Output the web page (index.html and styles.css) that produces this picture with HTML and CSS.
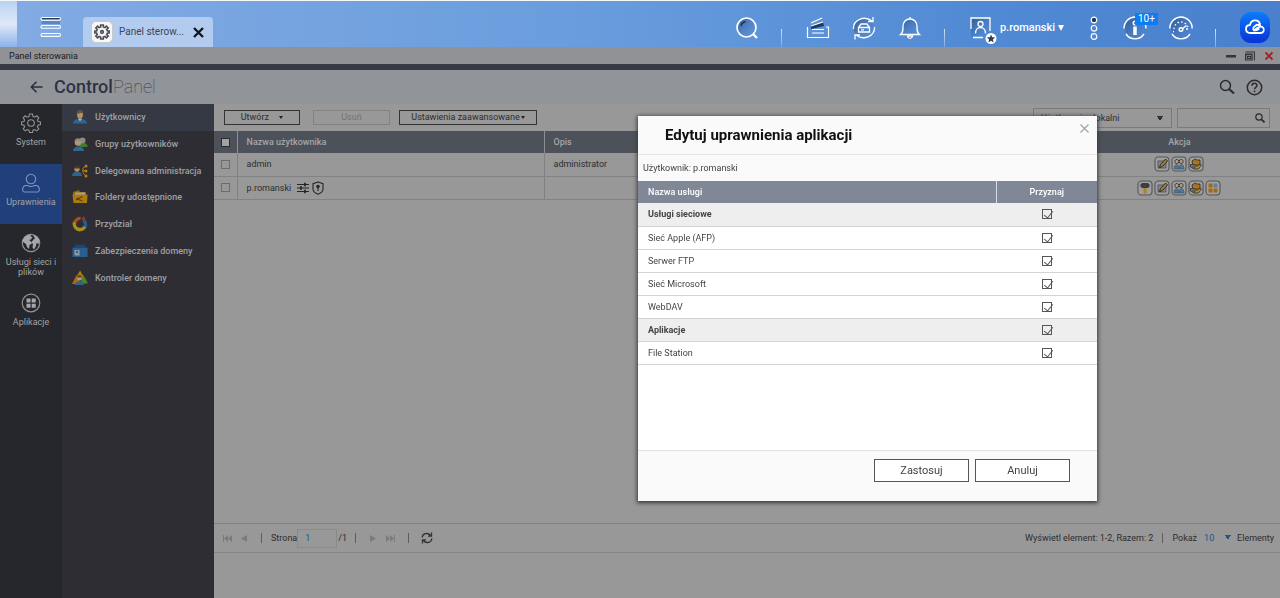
FILE: index.html
```html
<!DOCTYPE html>
<html lang="pl">
<head>
<meta charset="utf-8">
<title>Panel sterowania</title>
<link rel="stylesheet" href="styles.css">
</head>
<body>
<svg width="0" height="0" class="defs" aria-hidden="true">
  <defs>
    <linearGradient id="cloudBg" x1="0" y1="0" x2="0" y2="1"><stop offset="0" stop-color="#0a7cfb"/><stop offset="1" stop-color="#0a32d8"/></linearGradient>
    <linearGradient id="shade" x1="0" y1="0" x2="1" y2="1"><stop offset="0" stop-color="#24426f" stop-opacity=".7"/><stop offset="1" stop-color="#4f83c9" stop-opacity="0"/></linearGradient>
    <symbol id="pencil" viewBox="0 0 16 16"><rect x="1" y="1" width="14" height="14" rx="3.5" fill="#a0a0a0" stroke="#555" stroke-width="1.1"/><rect x="4" y="5" width="8" height="7" fill="#7d8590" stroke="#454b56" stroke-width=".8"/><path d="M5.500 11.500l1-3 5-5.500 2 2-5 5.500z" fill="#a97c26" stroke="#2b2b2b" stroke-width="1"/></symbol>
    <symbol id="group" viewBox="0 0 16 16"><rect x="1" y="1" width="14" height="14" rx="3.5" fill="#a0a0a0" stroke="#555" stroke-width="1.1"/><path d="M3 13c0-6 5-6 5-.3 0-5.700 5-5.700 5 .3z" fill="#4f7796" stroke="#34536f" stroke-width=".6"/><circle cx="5.800" cy="5.500" r="2" fill="#b5a28b" stroke="#3b332c" stroke-width=".9"/><circle cx="10.200" cy="5.500" r="2" fill="#b5a28b" stroke="#3b332c" stroke-width=".9"/></symbol>
    <symbol id="share" viewBox="0 0 16 16"><rect x="1" y="1" width="14" height="14" rx="3.500" fill="#a0a0a0" stroke="#555" stroke-width="1.1"/><path d="M4 5l3-2 2 1h3v5H5z" fill="#a57622" stroke="#2f2a26" stroke-width=".8"/><path d="M2.500 8.500h3l1 1.500h3l3-2 1 1-3 4H6l-3.500-2z" fill="#b58a36" stroke="#2f2a26" stroke-width=".8"/><path d="M3.500 9.500l4 1.500v2l-4-1.500z" fill="#2f5e8c"/></symbol>
    <symbol id="roller" viewBox="0 0 16 16"><rect x="1" y="1" width="14" height="14" rx="3.500" fill="#a0a0a0" stroke="#555" stroke-width="1.1"/><path d="M3.500 4.500L5 3h6l1.500 1.500v2L11 8H5L3.500 6.500z" fill="#3a3e43"/><path d="M6.500 8h3v5L8 14l-1.500-1z" fill="#b5801f"/></symbol>
    <symbol id="tiles" viewBox="0 0 16 16"><rect x="1" y="1" width="14" height="14" rx="3.500" fill="#a0a0a0" stroke="#555" stroke-width="1.100"/><path d="M3.500 3.500h4v4h-4zM3.500 8.500h4v4h-4zM8.500 8.500h4v4h-4z" fill="#a0690f"/><path d="M8.500 3.500h4v4h-4z" fill="#5d80a2"/></symbol>
  </defs>
</svg>

<header class="topbar">
  <button class="menu-btn" aria-label="Menu">
    <svg width="22" height="22" viewBox="0 0 22 22" fill="none" stroke="#fff" stroke-width="1.100"><rect x="1" y="1.500" width="19.500" height="2.600" rx="1.300" fill="#27385a"/><path d="M1.500 5h18.500v3H1.500z" fill="#24426f" fill-opacity=".35" stroke="none"/><rect x="1" y="9.500" width="19.500" height="2.800" rx="1.400"/><rect x="1" y="17.500" width="19.500" height="2.900" rx="1.400"/></svg>
  </button>
  <div class="tab">
    <span class="tab-icon">
      <svg width="16" height="16" viewBox="0 0 24 24" fill="none" stroke="#4b4d52" stroke-width="2.400"><path d="M10 1.500h4v3l2.400 1 2.200-2.200 2.700 2.700-2.200 2.200 1 2.300h3v3h-3l-1 2.400 2.200 2.200-2.700 2.700-2.200-2.200-2.400 1v3h-4v-3l-2.400-1-2.200 2.200-2.700-2.700 2.200-2.200-1-2.400h-3v-3h3l1-2.300L2.700 6l2.700-2.700 2.200 2.200 2.400-1z"/><circle cx="12" cy="12" r="2"/></svg>
    </span>
    <span class="tab-label">Panel sterow...</span>
    <button class="tab-close" aria-label="Zamknij kartę"><svg width="11" height="11" viewBox="0 0 11 11" stroke="#151515" stroke-width="2.300"><path d="M1 1l9 9M10 1L1 10"/></svg></button>
  </div>
  <nav class="tools" aria-label="Pasek narzędzi">
    <button class="tool" aria-label="Szukaj"><svg width="24" height="24" viewBox="0 0 24 24" fill="none" stroke="#fff" stroke-width="1.700"><circle cx="11.500" cy="11.500" r="9.500" fill="url(#shade)"/><path d="M18 18l4 4" stroke-width="2.400"/><path d="M6 10c.5-2.500 2-3.800 4.500-4.300" stroke="#263752"/></svg></button>
    <i class="sep"></i>
    <button class="tool" aria-label="Multimedia"><svg width="24" height="24" viewBox="0 0 24 24" fill="none" stroke="#fff" stroke-width="1.200"><path d="M5 10l12-4 1 4-13 3z" fill="#263752" stroke="none"/><path d="M5 7l11-5M5 10l12-4M6 13.500h12M6 17h12M1.500 11v10.500h21V11h-2.500"/></svg></button>
    <button class="tool" aria-label="Urządzenia"><svg width="24" height="24" viewBox="0 0 24 24" fill="none" stroke="#fff" stroke-width="1.300"><circle cx="12" cy="12" r="10.500" fill="url(#shade)" stroke="none"/><path d="M1.500 13C1 4 12-1 20 5M22.500 11c.5 9-10.500 14-18.500 8M21 1v4.500h-5M3 23.500V19h5"/><path d="M6.500 11.500L9 8h6l2.500 3.500v4.500h-11zM6.500 11.500h11M9 13.800h3"/></svg></button>
    <button class="tool" aria-label="Powiadomienia"><svg width="24" height="24" viewBox="0 0 24 24" fill="none" stroke="#fff" stroke-width="1.300"><path d="M2.500 18.500c2.500-2 2.500-4 2.500-8 0-4.500 3-7.500 7-7.500s7 3 7 7.500c0 4 0 6 2.500 8z" fill="url(#shade)"/><path d="M12 1v2"/><path d="M9.500 20c.5 3 4.500 3 5 0z" fill="#263752"/></svg></button>
    <i class="sep"></i>
    <button class="user">
      <svg width="28" height="28" viewBox="0 0 28 28" fill="none" stroke="#fff" stroke-width="1.300"><rect x="2" y="2" width="19" height="18" fill="url(#shade)" stroke="none"/><path d="M2 13V2h19v13M4 21.500h10"/><circle cx="11.500" cy="8" r="2.500"/><path d="M6.500 17.500c0-8 10-8 10 0"/><circle cx="22" cy="22.500" r="5.500" fill="#fff" stroke="none"/><path d="M22 18.500l1.200 2.700 2.900.3-2.200 2 .7 2.900-2.600-1.600-2.600 1.600.7-2.900-2.200-2 2.900-.3z" fill="#29415f" stroke="none"/></svg>
      <span>p.romanski</span>
      <svg width="6" height="6" viewBox="0 0 6 6"><path d="M0 0h6L3 6z" fill="#fff"/></svg>
    </button>
    <button class="more" aria-label="Więcej"><svg width="8" height="24" viewBox="0 0 8 24" fill="none" stroke="#fff" stroke-width="1.200"><circle cx="4" cy="4" r="2.800" fill="#263752"/><circle cx="4" cy="12.300" r="2.800"/><circle cx="4" cy="20.500" r="2.800"/></svg></button>
    <button class="tool info" aria-label="Informacje"><svg width="24" height="24" viewBox="0 0 24 24" fill="none" stroke="#fff" stroke-width="1.400"><circle cx="12" cy="12" r="10" fill="url(#shade)" stroke="none"/><path d="M1 12.500C1 6 6 1 12 1s11 5 11 11.500M3 18c4.500 6.500 13.500 6.500 18 0"/><circle cx="12" cy="7" r="1.800"/><path d="M12 10.500v8.500" stroke-width="3.500"/></svg><span class="badge">10+</span></button>
    <button class="tool dash" aria-label="Pulpit"><svg width="24" height="24" viewBox="0 0 24 24" fill="none" stroke="#fff" stroke-width="1.400"><circle cx="12" cy="12" r="10" fill="url(#shade)" stroke="none"/><path d="M.8 12.500C.8 6 6 1 12 1s11.200 5 11.200 11.500M3 18c4.500 6.500 13.500 6.500 18 0"/><path d="M5 13a7 7 0 0 1 14 0" stroke-dasharray="1.500 2.200"/><circle cx="12" cy="13.500" r="1.800"/><path d="M13 13l4.500-3.500M4 15.500h1M17 13h2"/></svg></button>
    <i class="sep"></i>
    <button class="cloud" aria-label="myQNAPcloud"><svg width="30" height="31" viewBox="0 0 30 31"><rect width="30" height="31" rx="11" fill="url(#cloudBg)"/><path d="M14 18.500l2.500-2c3-2.300 5.200-2.300 6.700-.7 1.700 2.200.3 5.200-3 5.200H10.500C7.500 21 6 19 6 17c0-2.300 1.700-3.900 4-4 .5-3 2.500-4.700 5.200-4.700 2.300 0 4.200 1.400 4.800 3.700M20.300 13.500c-1.500-1-3.300-1-5 .3-1.600 1.200-3 2.800-1.500 4.200 1.200 1 3.500 0 5-1" fill="none" stroke="#fff" stroke-width="1.800" stroke-linecap="round" stroke-linejoin="round"/></svg></button>
  </nav>
</header>

<div class="window">
  <div class="titlebar">
    <span>Panel sterowania</span>
    <div class="win-btns">
      <button aria-label="Minimalizuj"><svg width="10" height="10" viewBox="0 0 10 10"><path d="M0 4h10v2.500H0z" fill="#33353b"/></svg></button>
      <button aria-label="Maksymalizuj"><svg width="10" height="10" viewBox="0 0 10 10" fill="none" stroke="#33353b" stroke-width="1.200"><path d="M.6 3h6.500v6H.6zM.5 1h9v8.500M1 3.600h6.500M2.500 5.500h3v2h-3z"/></svg></button>
      <button aria-label="Zamknij"><svg width="10" height="10" viewBox="0 0 10 10" stroke="#a02323" stroke-width="1.800"><path d="M1.500 1.500l7 7M8.500 1.500l-7 7"/></svg></button>
    </div>
  </div>
  <div class="apphead">
    <button class="back" aria-label="Wstecz"><svg width="13" height="12" viewBox="0 0 13 12" fill="none" stroke="#2a2c3c" stroke-width="1.500"><path d="M12.500 6H1.500M6.500 .8L1.300 6l5.200 5.200"/></svg></button>
    <h1><b>Control</b>Panel</h1>
    <div class="head-btns">
      <button aria-label="Szukaj"><svg width="16" height="16" viewBox="0 0 16 16" fill="none" stroke="#2b2c30" stroke-width="1.500"><circle cx="6.500" cy="6.500" r="5"/><path d="M10 10l5 4.500" stroke-width="2.200"/></svg></button>
      <button aria-label="Pomoc"><svg width="17" height="17" viewBox="0 0 17 17" fill="none" stroke="#2b2c30" stroke-width="1.500"><circle cx="8.500" cy="8.500" r="7.200"/><path d="M6 6.800c0-3.200 5-3.200 5-.3 0 1.900-2.500 1.900-2.500 3.700M8.500 11.500v1.700"/></svg></button>
    </div>
  </div>
  <div class="body">
    <nav class="rail" aria-label="Sekcje">
      <a href="#"><svg width="20" height="20" viewBox="0 0 20 20" fill="none" stroke="#929295" stroke-width="1.100"><path d="M8.500 1h3l.5 2.500 1.700.7 2.100-1.400 2 2-1.400 2.200.7 1.600 2.400.4v2.500l-2.400.6-.7 1.600 1.400 2.200-2 2-2.100-1.400-1.700.7-.5 2.300h-3L8 17.200l-1.700-.7-2.100 1.400-2-2 1.400-2.200-.7-1.600L.5 11.500V9l2.400-.4.7-1.600-1.400-2.200 2-2 2.100 1.400L8 3.500z"/><circle cx="10" cy="10" r="3.300"/></svg><span>System</span></a>
      <a href="#" class="on"><svg width="20" height="20" viewBox="0 0 20 20" fill="none" stroke="#7f95c1" stroke-width="1.100"><circle cx="10" cy="6" r="4.700"/><path d="M4 12.500h2.500c2.500 1.500 4.500 1.500 7 0H16c3 1.500 3 6 1 6.500H3c-2-.5-2-5 1-6.500z"/></svg><span>Uprawnienia</span></a>
      <a href="#"><svg width="20" height="20" viewBox="0 0 20 20"><circle cx="10" cy="10" r="8.700" fill="none" stroke="#929295" stroke-width="1.200"/><path d="M2 7c1-3 4-5.500 8-5.500l-.5 2 2 .5L10 6.500 8 7l2 1.500 1 2L8.500 12 8 16l-2-2-1-3-3-2zM12 2c3 .5 6 3 6.500 6l-1 3-2-1-.5 3-2 3.500-1.500-2 .5-3-1.500-2.500 2-2.500 1.500-1z" fill="#a7a7a9"/></svg><span>Usługi sieci i plików</span></a>
      <a href="#"><svg width="20" height="20" viewBox="0 0 20 20"><circle cx="10" cy="10" r="8.800" fill="none" stroke="#929295" stroke-width="1.200"/><path d="M5.500 5.500h4v4h-4zM10.700 5.500h4v4h-4zM5.500 10.700h4v4h-4zM10.700 10.700h4v4h-4z" fill="#a7a7a9"/></svg><span>Aplikacje</span></a>
    </nav>
    <nav class="side" aria-label="Uprawnienia">
      <div class="side-list">
      <a href="#" class="on"><svg width="16" height="16" viewBox="0 0 16 16"><path d="M1 14.500c0-6.500 14-6.500 14 0z" fill="#2f6490"/><path d="M6 9.500h4l-2 3z" fill="#bbb"/><ellipse cx="8" cy="5.500" rx="3" ry="3.900" fill="#b58f67"/><path d="M4.700 5C4 .3 12 .3 11.300 5 10 3 7 4.500 4.700 5z" fill="#6b543a"/></svg>Użytkownicy</a>
      <a href="#"><svg width="16" height="16" viewBox="0 0 16 16"><path d="M6 9c1-4 10-3 9.500 2H8z" fill="#3d7a32"/><circle cx="10.500" cy="4.500" r="3" fill="#8b8b85"/><path d="M1 15c0-6 11-6 11 0z" fill="#316890"/><circle cx="6" cy="6.500" r="3.300" fill="#b79670"/><path d="M2.700 6C2 1 10 1 9.300 6 8 4 5 5 2.700 6z" fill="#8c8d8a"/></svg>Grupy użytkowników</a>
      <a href="#"><svg width="16" height="16" viewBox="0 0 16 16"><path d="M0 13c0-6 10-6 10 0z" fill="#2f6490"/><circle cx="5" cy="6" r="2.600" fill="#b58f67"/><path d="M2.400 5.500c0-4 5.500-4 5.300 0z" fill="#4d3a27"/><path d="M14 3l-3 2v5l3 3M10 7.500h4" fill="none" stroke="#a6771e"/><circle cx="14" cy="3" r="1.500" fill="#b98018"/><circle cx="14" cy="8" r="1.500" fill="#b98018"/><circle cx="14" cy="13" r="1.500" fill="#b98018"/></svg>Delegowana administracja</a>
      <a href="#"><svg width="16" height="16" viewBox="0 0 16 16"><path d="M1 3l6-2 1 2h6v5H1z" fill="#8e6715"/><path d="M3 3.500h10V8H3z" fill="#aaa383"/><path d="M.5 5.500h15L15 14H1.500z" fill="#ab7b10"/><path d="M10.500 7.500l-5 2.500 5 2" fill="none" stroke="#5e4207" stroke-width="1.300"/><circle cx="5.500" cy="10" r="1.300" fill="#5e4207"/></svg>Foldery udostępnione</a>
      <a href="#"><svg width="16" height="16" viewBox="0 0 16 16" fill="none" stroke-width="3.300"><path d="M8.500 2.500A5.500 5.500 0 0 0 2.500 8" stroke="#a5501c"/><path d="M2.500 6.500A5.500 5.500 0 0 0 8 13.500" stroke="#a88e16"/><path d="M7 13.500c3 .3 5-1.200 6-3" stroke="#ac8d16"/><path d="M13 11c1-2 .5-5-1.500-7" stroke="#295c91"/><path d="M10.500 1.500l2 2" stroke="#9b3020"/></svg>Przydział</a>
      <a href="#"><svg width="16" height="16" viewBox="0 0 16 16"><path d="M1 4l2-1 1-2 2 1 2-1 2 1 2-1 1 2 2 1v3H1z" fill="#20466d"/><path d="M.5 5h15v9H.5z" fill="#285f90"/><path d="M2.500 7h5v5.500h-5z" fill="#8b9dac"/><circle cx="5" cy="9" r="1.200" fill="#396080"/></svg>Zabezpieczenia domeny</a>
      <a href="#"><svg width="16" height="16" viewBox="0 0 16 16"><path d="M8 .5l4.500 8h-9z" fill="#ab8115"/><path d="M4.500 5L9 14H0z" fill="#ab6a18"/><path d="M11.500 5L16 13.500H8z" fill="#4a8527"/><path d="M3 15c0-5 9-5 9 0z" fill="#2f6490"/><circle cx="7.500" cy="8" r="2.500" fill="#b79670"/><path d="M5 7.500c0-3.500 5-3.500 5 0z" fill="#574330"/></svg>Kontroler domeny</a>
      </div>
    </nav>
    <main class="content">
      <div class="toolbar">
        <button class="btn create">Utwórz <i class="caret"></i></button>
        <button class="btn remove" disabled>Usuń</button>
        <button class="btn advanced">Ustawienia zaawansowane<i class="caret"></i></button>
        <select class="scope" aria-label="Typ użytkowników"><option>Użytkownicy lokalni</option></select>
        <div class="search"><input type="search" aria-label="Szukaj użytkownika"><svg width="10" height="10" viewBox="0 0 10 10" fill="none" stroke="#2c2c2c" stroke-width="1.200"><circle cx="4" cy="4" r="3.200"/><path d="M6.300 6.300L9.500 9.300" stroke-width="1.700"/></svg></div>
      </div>
      <table class="users">
        <colgroup><col class="c-check"><col class="c-name"><col><col class="c-action"></colgroup>
        <thead><tr><th><input type="checkbox" aria-label="Zaznacz wszystkie"></th><th>Nazwa użytkownika</th><th>Opis</th><th class="act">Akcja</th></tr></thead>
        <tbody>
          <tr><td><input type="checkbox" aria-label="Zaznacz admin"></td><td>admin</td><td>administrator</td>
            <td class="act"><div class="acts"><button aria-label="Edytuj"><svg><use href="#pencil"/></svg></button><button aria-label="Grupy"><svg><use href="#group"/></svg></button><button aria-label="Foldery"><svg><use href="#share"/></svg></button></div></td></tr>
          <tr><td><input type="checkbox" aria-label="Zaznacz p.romanski"></td>
            <td><div class="name"><span>p.romanski</span><svg width="12" height="12" viewBox="0 0 12 12" stroke="#262626" stroke-width="1.200"><path d="M0 2.500h12M0 6h12M0 9.500h12"/><path d="M8 .8v3.400M4 4.300v3.400M8 7.800v3.400" stroke-width="1.800"/></svg><svg width="12" height="14" viewBox="0 0 12 14" fill="none" stroke="#262626" stroke-width="1.100"><path d="M6 1l5 1.700v5.500c0 2-2 3.800-5 5-3-1.200-5-3-5-5V2.700z"/><circle cx="6" cy="5.500" r="1.200" fill="#262626"/><path d="M6 6v4"/></svg></div></td><td></td>
            <td class="act"><div class="acts"><button aria-label="Hasło"><svg><use href="#roller"/></svg></button><button aria-label="Edytuj"><svg><use href="#pencil"/></svg></button><button aria-label="Grupy"><svg><use href="#group"/></svg></button><button aria-label="Foldery"><svg><use href="#share"/></svg></button><button aria-label="Aplikacje"><svg><use href="#tiles"/></svg></button></div></td></tr>
        </tbody>
      </table>
      <div class="pager">
        <button aria-label="Pierwsza"><svg width="9" height="7" viewBox="0 0 9 7" fill="#7b7b7b"><path d="M0 0h1v7H0zM5 0v7L1 3.500zM9 0v7L5 3.500z"/></svg></button>
        <button class="prev" aria-label="Poprzednia"><svg width="6" height="7" viewBox="0 0 6 7" fill="#7b7b7b"><path d="M6 0v7L0 3.500z"/></svg></button>
        <i class="bar"></i>
        <label for="page">Strona</label><input id="page" type="text" value="1"><span class="of">/1</span>
        <i class="bar"></i>
        <button class="next" aria-label="Następna"><svg width="6" height="7" viewBox="0 0 6 7" fill="#7b7b7b"><path d="M0 0v7l6-3.500z"/></svg></button>
        <button class="last" aria-label="Ostatnia"><svg width="9" height="7" viewBox="0 0 9 7" fill="#7b7b7b"><path d="M8 0h1v7H8zM0 0v7l4-3.500zM4 0v7l4-3.500z"/></svg></button>
        <i class="bar"></i>
        <button class="reload" aria-label="Odśwież"><svg width="12" height="12" viewBox="0 0 12 12" fill="none" stroke="#333" stroke-width="1.300"><path d="M1.200 5.500C1.200 1.500 7 0 9.500 3.500M10.800 6.500C10.800 10.500 5 12 2.500 8.500M10.500 .5v3.700H7M1.500 11.500V7.800H5"/></svg></button>
        <span class="summary">Wyświetl element: 1-2, Razem: 2</span>
        <i class="bar"></i>
        <label for="count">Pokaż</label>
        <select id="count"><option>10</option></select>
        <span class="unit">Elementy</span>
      </div>
      <div class="status"></div>
    </main>
  </div>
</div>

<section class="dialog" role="dialog" aria-labelledby="dlg-title">
  <header class="dlg-head"><h2 id="dlg-title">Edytuj uprawnienia aplikacji</h2><button class="dlg-close" aria-label="Zamknij"><svg width="9" height="9" viewBox="0 0 9 9" stroke="#a3a3a3" stroke-width="1.200"><path d="M.5 .5l8 8M8.500 .5l-8 8"/></svg></button></header>
  <p class="dlg-user">Użytkownik: p.romanski</p>
  <div class="dlg-body">
    <table class="perms">
      <colgroup><col><col class="c-grant"></colgroup>
      <thead><tr><th>Nazwa usługi</th><th>Przyznaj</th></tr></thead>
      <tbody>
        <tr class="grp"><td><label for="p1">Usługi sieciowe</label></td><td><input id="p1" type="checkbox" checked></td></tr>
        <tr><td><label for="p2">Sieć Apple (AFP)</label></td><td><input id="p2" type="checkbox" checked></td></tr>
        <tr><td><label for="p3">Serwer FTP</label></td><td><input id="p3" type="checkbox" checked></td></tr>
        <tr><td><label for="p4">Sieć Microsoft</label></td><td><input id="p4" type="checkbox" checked></td></tr>
        <tr><td><label for="p5">WebDAV</label></td><td><input id="p5" type="checkbox" checked></td></tr>
        <tr class="grp"><td><label for="p6">Aplikacje</label></td><td><input id="p6" type="checkbox" checked></td></tr>
        <tr><td><label for="p7">File Station</label></td><td><input id="p7" type="checkbox" checked></td></tr>
      </tbody>
    </table>
  </div>
  <footer class="dlg-foot"><button>Zastosuj</button><button>Anuluj</button></footer>
</section>
</body>
</html>
```
FILE: styles.css
```css
* { box-sizing: border-box; }
body {
  margin: 0;
  min-height: 100vh;
  display: flex;
  flex-direction: column;
  font: 9px/12px Roboto, "Open Sans", sans-serif;
  color: #2d2d2d;
  background: #989898;
}
button { padding: 0; border: 0; background: none; font: inherit; color: inherit; }
input, select { font: inherit; color: inherit; margin: 0; }
svg { display: block; flex: none; }
a { color: inherit; text-decoration: none; }
.defs { position: absolute; }

.topbar {
  height: 47px;
  display: flex;
  border-top: 1px solid #f4f8f8;
  background:
    linear-gradient(#b9d3f3, #dfe9f7 50%, #8bb2e8) left / 17px 100% no-repeat,
    linear-gradient(90deg, #83abe3, #699ddd 45%, #5089d4 78%, #4a80cd);
}
.menu-btn { margin-left: 40px; width: 22px; padding-top: 5px; }
.tab {
  display: flex;
  align-items: center;
  align-self: flex-end;
  width: 130px;
  height: 30px;
  margin-left: 21px;
  padding: 0 9px 0 8px;
  border-radius: 4px 4px 0 0;
  background: #b2cbee;
}
.tab-icon {
  display: flex;
  align-items: center;
  justify-content: center;
  width: 22px;
  height: 22px;
  border: 1px solid #c9c9c9;
  border-radius: 5px;
  background: #f7f7f7;
}
.tab-label { flex: 1; margin-left: 6px; font-size: 10px; color: #3d4656; }
.tools { display: flex; align-items: center; margin-left: auto; padding: 7px 10px 0 0; }
.tool { position: relative; width: 24px; margin-right: 22px; }
.sep { align-self: flex-end; width: 1px; height: 18px; background: linear-gradient(#d3e2f6, #7fa8e0); }
.tools .sep { margin-right: 24px; }
.user { display: flex; align-items: center; gap: 3px; margin-right: 26px; color: #fff; font-size: 11px; font-weight: 500; }
.user svg:first-child { margin-top: 4px; }
.more { margin-right: 25px; }
.badge {
  position: absolute;
  left: 12px;
  top: -3px;
  padding: 0 3px;
  background: #0a7df2;
  font-size: 10px;
  line-height: 12px;
  color: #fff;
}
.cloud { width: 30px; }

.window { flex: 1; display: flex; flex-direction: column; }
.titlebar {
  display: flex;
  align-items: center;
  height: 23px;
  padding: 0 6px 0 9px;
  border-bottom: 6px solid #393a47;
  background: #909296;
  color: #1c1c1c;
}
.win-btns { display: flex; gap: 9px; margin-left: auto; }
.apphead {
  display: flex;
  align-items: center;
  height: 34px;
  padding: 0 17px 0 30px;
  background: #919499;
}
.apphead h1 { margin: 0 0 0 11px; font-size: 18px; line-height: 24px; font-weight: 100; color: #3c3e46; }
.apphead b { font-weight: 500; color: #2f3145; }
.head-btns { display: flex; align-items: center; gap: 11px; margin-left: auto; }
.body { flex: 1; display: flex; }

.rail { width: 62px; background: #26272c; color: #a3a3a5; font-weight: 400; text-align: center; line-height: 10px; }
.rail a { display: flex; flex-direction: column; align-items: center; gap: 4px; height: 60px; padding: 9px 3px 0; }
.rail .on { background: #213f7b; }
.side {
  width: 152px;
  background: #2e2d34;
  color: #a0a0a3;
  font-weight: 500;
}
.side-list { display: grid; grid-auto-rows: 1fr; height: 187px; }
.side a { display: flex; align-items: center; gap: 7px; padding-left: 10px; white-space: nowrap; }
.side .on { background: #343943; }

.content { flex: 1; min-width: 0; display: flex; flex-direction: column; }
.toolbar { display: flex; align-items: center; height: 27px; padding: 0 10px; }
.btn { height: 15px; border: 1px solid #333; line-height: 13px; white-space: nowrap; }
.create { width: 76px; }
.remove { width: 77px; margin: 0 9px 0 13px; border-color: #828282; color: #737373; }
.advanced { width: 138px; }
.caret { display: inline-block; vertical-align: middle; border: 2px solid transparent; border-top: 3px solid #222; border-bottom: 0; }
.create .caret { margin-left: 8px; }
.advanced .caret { margin-left: 1px; }
.scope {
  appearance: none;
  width: 139px;
  height: 20px;
  margin-left: auto;
  padding: 0 7px;
  border: 1px solid #7a7a7a;
  border-radius: 0;
  background: linear-gradient(to bottom left, #333 50%, transparent 50%) 123px 7px / 3px 5px no-repeat,
    linear-gradient(to bottom right, #333 50%, transparent 50%) 126px 7px / 3px 5px no-repeat;
}
.search { display: flex; align-items: center; width: 93px; height: 20px; margin-left: 5px; padding-right: 4px; border: 1px solid #7a7a7a; }
.search input { flex: 1; min-width: 0; border: 0; background: none; }

.users { width: 100%; border-collapse: collapse; table-layout: fixed; }
.c-check { width: 23px; }
.c-name { width: 307px; }
.c-action { width: 201px; }
.users th, .users td { height: 23px; padding: 0 0 0 9px; text-align: left; font-weight: 400; border-right: 1px solid #808080; border-bottom: 1px solid #828282; }
.users th { height: 22px; background: #4d515a; color: #a4a6aa; font-weight: 500; border-right-color: #8d8f93; border-bottom: 0; }
.users th:first-child, .users td:first-child { padding: 0 0 0 7px; }
.users th.act, .users td.act { padding: 0; text-align: center; border-right: 0; }
.users th:nth-child(3), .users td:nth-child(3) { border-right: 0; }
.users input { appearance: none; display: block; width: 9px; height: 9px; border: 1px solid #6c6c6c; }
.users th input { border-color: #2b2b2b; background: #a2a2a2; }
.name { display: flex; align-items: center; gap: 3px; }
.name span { margin-right: 3px; }
.acts { display: flex; justify-content: center; gap: 1px; padding-right: 2px; }
.acts svg { width: 16px; height: 16px; }

.pager {
  display: flex;
  align-items: center;
  height: 30px;
  margin-top: auto;
  padding: 0 6px 0 9px;
  border-top: 1px solid #808080;
  border-bottom: 1px solid #858585;
}
.prev { margin: 0 14px 0 9px; }
.bar { width: 1px; height: 10px; background: #5c5c5c; }
.pager label[for="page"] { margin-left: 9px; }
#page { width: 40px; height: 19px; padding: 0 7px; border: 1px solid #8a8a8a; background: none; color: #1d5688; }
.of { margin: 0 8px 0 1px; }
.next { margin: 0 10px 0 14px; }
.last { margin-right: 13px; }
.reload { margin-left: 12px; }
.summary { margin: 0 9px 0 auto; }
.pager label[for="count"] { margin-left: 9px; }
#count {
  appearance: none;
  width: 32px;
  margin-left: 3px;
  padding: 0 4px;
  border: 0;
  color: #1d5688;
  background: linear-gradient(to bottom left, #1d5688 50%, transparent 50%) 25px 3px / 3px 5px no-repeat,
    linear-gradient(to bottom right, #1d5688 50%, transparent 50%) 28px 3px / 3px 5px no-repeat;
}
.unit { margin-left: 5px; }
.status { height: 45px; }

.dialog {
  position: fixed;
  left: 638px;
  top: 116px;
  width: 459px;
  background: #fafafa;
  box-shadow: 0 1px 4px 1px #3a3a3a;
  color: #444;
}
.dlg-head { display: flex; align-items: center; height: 39px; padding: 0 8px 0 27px; border-bottom: 1px solid #e4e4e4; }
.dlg-head h2 { flex: 1; margin: 0; font-size: 15px; line-height: 20px; font-weight: 700; color: #111; }
.dlg-close { align-self: flex-start; padding-top: 8px; }
.dlg-user { margin: 0; padding: 7px 5px; }
.dlg-body { min-height: 270px; border-bottom: 1px solid #e2e2e2; background: #fff; }
.perms { width: 100%; border-collapse: collapse; table-layout: fixed; }
.c-grant { width: 101px; }
.perms th, .perms td { height: 23px; padding: 0 10px; text-align: left; border-bottom: 1px solid #d4d4d4; }
.perms th { height: 22px; background: #808797; color: #fff; font-weight: 500; border: 0; }
.perms th:last-child { text-align: center; border-left: 1px solid #d9dbe0; }
.perms .grp td { background: #eee; font-weight: 700; }
.perms input {
  appearance: none;
  display: block;
  width: 10px;
  height: 10px;
  margin: 0 auto;
  border: 1px solid #555;
}
.perms input:checked::before {
  content: "";
  display: block;
  width: 4px;
  height: 8px;
  margin: -1px 0 0 3px;
  border: solid #555;
  border-width: 0 1px 1px 0;
  transform: rotate(38deg);
}
.dlg-foot { display: flex; justify-content: flex-end; gap: 6px; padding: 8px 27px 19px; }
.dlg-foot button { width: 95px; height: 23px; border: 1px solid #555; background: #fff; font-size: 11px; }
```
